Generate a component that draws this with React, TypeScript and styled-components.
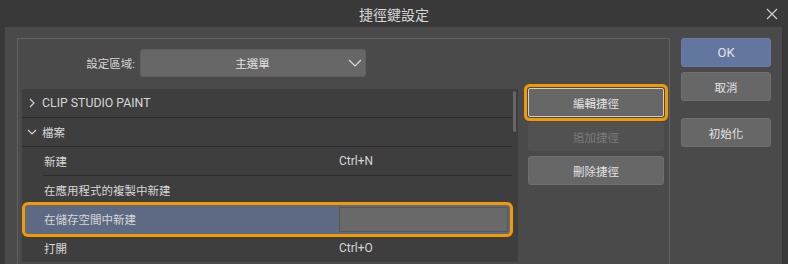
import React from 'react';
import styled, { createGlobalStyle } from 'styled-components';

interface Entry {
  label: string;
  shortcut?: string;
  kind: 'group' | 'item';
  expanded?: boolean;
  selected?: boolean;
  divider?: boolean;
  latin?: boolean;
}

const entries: Entry[] = [
  { label: 'CLIP STUDIO PAINT', kind: 'group', expanded: false, divider: true, latin: true },
  { label: '檔案', kind: 'group', expanded: true, divider: true },
  { label: '新建', shortcut: 'Ctrl+N', kind: 'item', divider: true },
  { label: '在應用程式的複製中新建', kind: 'item' },
  { label: '在儲存空間中新建', kind: 'item', selected: true },
  { label: '打開', shortcut: 'Ctrl+O', kind: 'item' },
];

const GlobalStyle = createGlobalStyle`
html, body {
  margin: 0;
  padding: 0;
  background: #393939;
}
body {
  font-family: Roboto, "Noto Sans CJK TC", sans-serif;
}
`

const Window = styled.div`
width: 788px;
height: 264px;
overflow: hidden;
background: #393939;
display: flex;
flex-direction: column;
`

const TitleBar = styled.div`
height: 27px;
flex: none;
display: grid;
grid-template-columns: 40px 1fr 40px;
align-items: center;
color: #d8d8d8;
font-size: 14px;
`

const Title = styled.div`
grid-column: 2;
text-align: center;
`

const CloseButton = styled.div`
justify-self: end;
margin-right: 10px;
display: flex;
`

const Body = styled.div`
flex: 1;
min-height: 0;
display: flex;
padding: 0 6px 0 5px;
`

const Panel = styled.div`
flex: 1;
background: #4a4a4a;
display: flex;
align-items: flex-start;
gap: 11px;
padding: 11px 11px 0 12px;
`

const Frame = styled.div`
width: 653px;
height: 240px;
box-sizing: border-box;
border: 1px solid #626262;
border-bottom: none;
padding: 10px 5px 0 4px;
`

const SettingRow = styled.div`
display: flex;
align-items: center;
gap: 5px;
height: 28px;
`

const SettingLabel = styled.div`
width: 113px;
text-align: right;
color: #d4d4d4;
font-size: 11.5px;
`

const Dropdown = styled.div`
width: 226px;
height: 28px;
box-sizing: border-box;
background: #676767;
border: 1px solid #5f5f5f;
border-radius: 3px;
display: flex;
align-items: center;
padding: 0 3px 0 16px;
color: #e2e2e2;
font-size: 11.5px;
`

const DropdownText = styled.div`
flex: 1;
text-align: center;
`

const Content = styled.div`
display: flex;
gap: 10px;
margin-top: 12px;
`

const List = styled.div`
width: 496px;
height: 173px;
overflow: hidden;
background: #3e3e3e;
display: flex;
`

const Rows = styled.div`
flex: 1;
display: flex;
flex-direction: column;
`

const Row = styled.div<{ $child: boolean; $selected: boolean }>`
position: relative;
flex: none;
height: 29px;
display: flex;
padding-left: ${p => (p.$child ? (p.$selected ? 18 : 21) : 0)}px;
margin: 0 ${p => (p.$selected ? 2 : 0)}px 0 ${p => (p.$selected ? 3 : 0)}px;
background: ${p => (p.$selected ? '#5e6984' : 'transparent')};
border-radius: ${p => (p.$selected ? 3 : 0)}px;
box-shadow: ${p => (p.$selected ? '0 0 0 3px #f39a00' : 'none')};
z-index: ${p => (p.$selected ? 1 : 0)};
color: #d6d6d6;
font-size: 11.5px;
`

const RowInner = styled.div<{ $divider: boolean; $group: boolean }>`
flex: 1;
display: flex;
align-items: center;
box-sizing: border-box;
padding-left: ${p => (p.$group ? 5 : 1)}px;
border-bottom: 1px solid ${p => (p.$divider ? '#2c2c2c' : 'transparent')};
`

const Latin = styled.span<{ $size?: number }>`
font-size: ${p => p.$size ?? 12}px;
font-weight: 400;
`

const Chevron = styled.div`
width: 10px;
margin-right: 5px;
display: flex;
justify-content: center;
`

const ItemName = styled.div`
width: 295px;
`

const KeyBox = styled.div`
width: 169px;
height: 25px;
box-sizing: border-box;
margin-left: auto;
margin-right: 2px;
background: #696969;
border: 1px solid #575757;
`

const ScrollTrack = styled.div`
width: 6px;
padding: 2px 2px 0 1px;
box-sizing: border-box;
`

const ScrollThumb = styled.div`
height: 41px;
border-radius: 2px;
background: #666;
`

const ActionColumn = styled.div`
width: 136px;
margin-top: -1px;
display: flex;
flex-direction: column;
gap: 5px;
`

const Button = styled.div<{ $focused?: boolean; $disabled?: boolean; $primary?: boolean }>`
height: 29px;
box-sizing: border-box;
display: flex;
align-items: center;
justify-content: center;
font-size: 11.5px;
background: ${p => (p.$primary ? '#63769f' : p.$disabled ? '#515151' : '#676767')};
color: ${p => (p.$disabled ? '#7b7b7b' : '#e4e4e4')};
border: 1px solid ${p => (p.$focused ? '#d0d0d0' : p.$disabled ? '#515151' : p.$primary ? '#6a7ca4' : '#6f6f6f')};
box-shadow: ${p => (p.$focused ? '0 0 0 1px #4a4a4a, 0 0 0 4px #f39a00' : 'none')};
border-radius: ${p => (p.$focused ? 2 : 3)}px;
`

const SideColumn = styled.div`
width: 90px;
display: flex;
flex-direction: column;
`

const SideButton = styled(Button)<{ $gap: number }>`
margin-top: ${p => p.$gap}px;
`

function ChevronIcon({ open }: { open: boolean }) {
  return open ? (
    <svg width="10" height="8" viewBox="0 0 10 8">
      <polyline points="1,2 5,6 9,2" fill="none" stroke="#d0d0d0" strokeWidth="1.2" />
    </svg>
  ) : (
    <svg width="6" height="10" viewBox="0 0 6 10">
      <polyline points="1,1 5,5 1,9" fill="none" stroke="#d0d0d0" strokeWidth="1.2" />
    </svg>
  );
}

export default function App() {
  return (
    <>
      <GlobalStyle />
      <Window>
        <TitleBar>
          <Title>捷徑鍵設定</Title>
          <CloseButton>
            <svg width="12" height="12" viewBox="0 0 12 12">
              <path d="M1 1 L11 11 M11 1 L1 11" stroke="#cfcfcf" strokeWidth="1.2" />
            </svg>
          </CloseButton>
        </TitleBar>
        <Body>
          <Panel>
            <Frame>
              <SettingRow>
                <SettingLabel>設定區域:</SettingLabel>
                <Dropdown>
                  <DropdownText>主選單</DropdownText>
                  <svg width="14" height="8" viewBox="0 0 14 8">
                    <polyline points="1,1 7,7 13,1" fill="none" stroke="#dcdcdc" strokeWidth="1.2" />
                  </svg>
                </Dropdown>
              </SettingRow>
              <Content>
                <List>
                  <Rows>
                    {entries.map((e, i) => (
                      <Row key={i} $child={e.kind === 'item'} $selected={!!e.selected}>
                        <RowInner $divider={!!e.divider} $group={e.kind === 'group'}>
                          {e.kind === 'group' && (
                            <Chevron>
                              <ChevronIcon open={!!e.expanded} />
                            </Chevron>
                          )}
                          {e.kind === 'group' ? (
                            e.latin ? <Latin $size={12.3}>{e.label}</Latin> : <span>{e.label}</span>
                          ) : (
                            <ItemName>{e.label}</ItemName>
                          )}
                          {e.shortcut && <Latin>{e.shortcut}</Latin>}
                          {e.selected && <KeyBox />}
                        </RowInner>
                      </Row>
                    ))}
                  </Rows>
                  <ScrollTrack>
                    <ScrollThumb />
                  </ScrollTrack>
                </List>
                <ActionColumn>
                  <Button $focused>編輯捷徑</Button>
                  <Button $disabled>追加捷徑</Button>
                  <Button>刪除捷徑</Button>
                </ActionColumn>
              </Content>
            </Frame>
            <SideColumn>
              <SideButton $gap={0} $primary>
                <Latin $size={13}>OK</Latin>
              </SideButton>
              <SideButton $gap={5}>取消</SideButton>
              <SideButton $gap={17}>初始化</SideButton>
            </SideColumn>
          </Panel>
        </Body>
      </Window>
    </>
  );
}
